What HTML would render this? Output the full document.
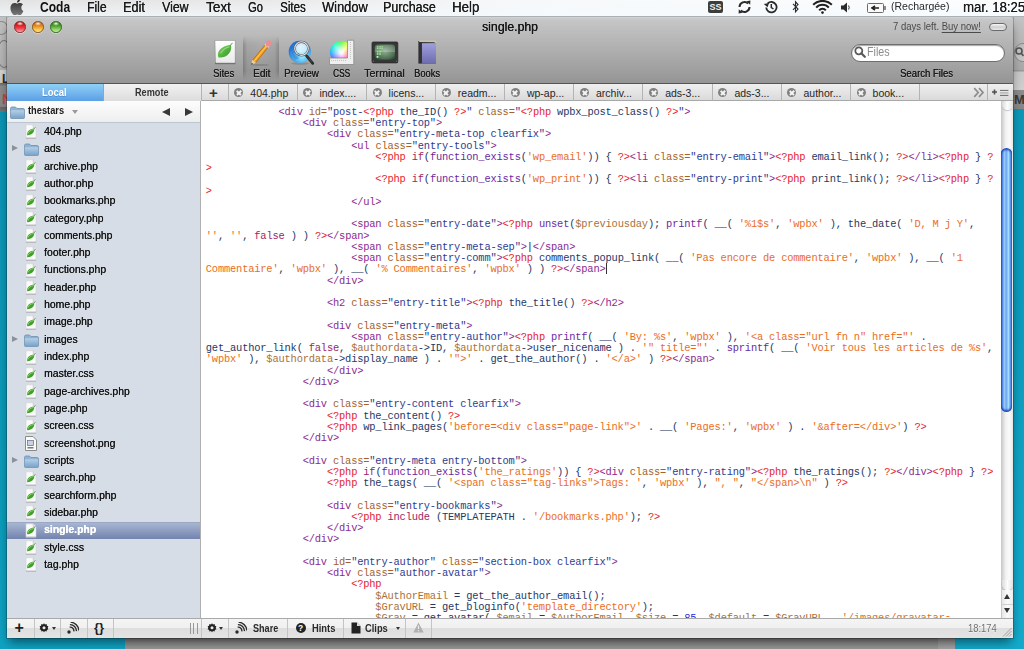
<!DOCTYPE html>
<html><head><meta charset="utf-8"><style>
*{margin:0;padding:0;box-sizing:border-box}
html,body{width:1024px;height:649px;overflow:hidden}
body{position:relative;font-family:"Liberation Sans",sans-serif;background:linear-gradient(170deg,#0a92b2 0%,#0c9cbc 60%,#14aacc 100%)}
.a{position:absolute}
b{font-weight:normal}
/* desktop background windows */
#bgw{position:absolute;left:125px;top:638px;width:830px;height:11px;background:linear-gradient(#7a7a7a,#8e8e8e 40%,#9a9a9a)}
#bgl{position:absolute;left:0;top:17px;width:7px;height:95px;background:linear-gradient(#c2c2c2 0,#b2b2b2 53px,#d4d4d4 53px,#cacaca 66px,#6a6a6a 66px,#7a7a7a 68px,#8c8c8c 69px,#888 90px,#666 90px,#777 95px)}
#bgr{position:absolute;left:1013px;top:17px;width:11px;height:92px;background:linear-gradient(#c4c4c4,#a9a9a9 53px,#9a9a9a 53px,#9a9a9a 54px,#c8c8c8 55px,#d0d0d0 73px,#8c8c8c 73px,#888 92px)}
/* menubar */
#menubar{position:absolute;z-index:5;left:0;top:0;width:1024px;height:17px;background:linear-gradient(rgba(255,255,255,0),rgba(245,250,253,.7)),linear-gradient(90deg,#e2e2e2,#e8e8e8 25%,#f6f8fa 50%,#fcfdfe 100%);border-bottom:1px solid #aab2b6}
.mi{z-index:6;position:absolute;top:-1px;font-size:13.5px;line-height:16px;color:#1c1c1c}
.mb{font-weight:bold}
/* window */
#win{position:absolute;left:7px;top:17px;width:1006px;height:621px;background:#bdbdbd;box-shadow:0 0 0 1px rgba(0,0,0,.2),0 6px 10px -2px rgba(0,0,0,.5)}
#tb{position:absolute;left:0;top:0;width:1006px;height:67px;background:linear-gradient(#d2d2d2,#c6c6c6 4%,#afafaf 50%,#959595);border-bottom:1px solid #555;border-radius:4px 4px 0 0}
.title{position:absolute;left:475px;top:19px;font-size:12.5px;color:#1a1a1a}
.lbl{position:absolute;top:66px;font-size:10.5px;color:#262626;text-shadow:0 1px 0 rgba(255,255,255,.35)}
/* tab bar */
#tabbar{position:absolute;left:201px;top:84px;width:812px;height:17px;background:linear-gradient(#efefef,#dadada);border-bottom:1px solid #a8a8a8}
.tdiv{position:absolute;top:84px;width:1px;height:17px;background:#b3b3b3}
.tx{position:absolute;top:88.4px;width:9px;height:9px;border-radius:50%;background:#808080}
.tx::before,.tx::after{content:'';position:absolute;left:1.6px;top:3.7px;width:5.8px;height:1.7px;background:#f4f4f4;transform:rotate(45deg)}
.tx::after{transform:rotate(-45deg)}
.tt{position:absolute;top:85.5px;font-size:10.5px;line-height:15px;color:#262626}
#local{position:absolute;left:7px;top:84px;width:96px;height:17px;background:linear-gradient(#8fd0f6,#5b9fe6)}
#remote{position:absolute;left:103px;top:84px;width:98px;height:17px;background:linear-gradient(#f2f2f2,#dcdcdc);border-left:1px solid #a0a0a0}
/* sidebar */
#side{position:absolute;left:7px;top:101px;width:193px;height:517px;background:#d6dde6}
#sidehdr{position:absolute;left:7px;top:101px;width:193px;height:22px;background:linear-gradient(#fdfdfd,#eeeeee);border-bottom:1px solid #bcc6d0}
.fn{position:absolute;left:43.5px;font-size:10.8px;line-height:13px;color:#151515;transform:scaleX(.965);transform-origin:0 0;text-shadow:0.2px 0 0 currentColor}
.selt{color:#fff;font-weight:bold}
.sel{position:absolute;left:7px;width:193px;height:17px;background:linear-gradient(#a8b6d2,#7283ad);border-top:1px solid #9aa8c6}
.tri{position:absolute;left:12px;width:0;height:0;border-left:6px solid #8c9099;border-top:3.5px solid transparent;border-bottom:3.5px solid transparent}
#divv{position:absolute;left:200px;top:101px;width:1px;height:517px;background:#b0b0b0}
/* editor */
#ed{position:absolute;left:201px;top:101px;width:800px;height:517px;background:#fff;overflow:hidden}
.cl{position:absolute;left:4.8px;white-space:pre;font-family:"Liberation Mono",monospace;font-size:10.4px;letter-spacing:-0.18px;line-height:11.245px;color:#222}

/* scrollbar */
#sb{position:absolute;left:1001px;top:101px;width:12px;height:517px;background:linear-gradient(90deg,#c6c6c6,#f2f2f2 40%,#fafafa 70%,#e6e6e6)}
/* bottom bar */
#bb{position:absolute;left:7px;top:618px;width:1006px;height:20px;background:linear-gradient(#f4f4f4,#f0f0f0 45%,#dedede 50%,#e4e4e4);border-top:1px solid #a9a9a9}
.bdiv{position:absolute;top:619px;width:1px;height:19px;background:#c4c4c4}
.bt{position:absolute;top:622px;font-size:11px;font-weight:bold;color:#333}
.tl{position:absolute;top:21px;width:11.6px;height:11.6px;border-radius:50%;border:0.6px solid #555;box-shadow:0 1px 0 rgba(255,255,255,.35)}

.fit{position:absolute;white-space:nowrap;transform-origin:0 0}

</style></head><body>
<div id="bgw"></div><div class="a" style="left:938px;top:638px;width:17px;height:11px;background:rgba(255,255,255,.12)"></div>
<div id="bgl"></div>
<div class="a" style="left:-5px;top:21px;width:13px;height:14px;border-radius:50%;border:1px solid #8a8a8a"></div>
<div class="a" style="left:-3px;top:40px;width:14px;height:28px;border-radius:50%;border:1.5px solid #7a7a7a"></div>
<div class="a" style="left:2px;top:72px;font-size:12px;font-weight:bold;color:#2a2a2a">L</div>
<div class="a" style="left:2px;top:91px;font-size:14px;color:#c04a4a;font-weight:bold">N</div>
<div id="bgr"></div>
<div class="a" style="left:1013.5px;top:43px;width:20px;height:18.5px;border-radius:9px 0 0 9px;background:linear-gradient(#bcbcbc,#c8c8c8);border:1px solid #8a8a8a"></div>
<svg class="a" style="left:1015px;top:47px" width="9" height="10"><circle cx="4" cy="4" r="3" fill="none" stroke="#555" stroke-width="1.6"/><path d="M6 6L8.5 9" stroke="#555" stroke-width="1.8"/></svg>
<div class="a" style="left:1014px;top:92px;font-size:13px;font-weight:bold;color:#3a3a3a">Me</div>

<div id="menubar"></div>
<svg class="a" style="z-index:6;left:10px;top:-1px" width="14" height="16" viewBox="0 0 14 16"><defs><linearGradient id="ap" x1="0" y1="0" x2="0" y2="1"><stop offset="0" stop-color="#2a2a2a"/><stop offset="1" stop-color="#7a7a7a"/></linearGradient></defs><path d="M11.3 8.6c0-2 1.6-2.9 1.7-3-0.9-1.4-2.4-1.5-2.9-1.5-1.2-0.1-2.4 0.7-3 0.7-0.6 0-1.6-0.7-2.6-0.7C3.100 4.100 1.800 4.900 1.100 6.200-0.300 8.700 0.700 12.300 2.100 14.300c0.700 1 1.500 2 2.500 2 1-0 1.400-0.700 2.600-0.700 1.200 0 1.500 0.700 2.600 0.600 1.100 0 1.700-1 2.400-2 0.800-1.100 1.100-2.200 1.100-2.200S11.300 11.300 11.300 8.600zM9.300 2.600C9.800 2 10.200 1.100 10.100 0.200 9.300 0.200 8.300 0.700 7.800 1.300 7.300 1.900 6.900 2.800 7 3.700 7.900 3.700 8.800 3.200 9.300 2.600z" fill="url(#ap)"/></svg>
<div class="a" style="z-index:6;left:708px;top:1px;width:15px;height:12px;border-radius:2px;background:#3d3d3d;color:#eee;font-size:9px;font-weight:bold;line-height:12px;text-align:center">SS</div>
<svg class="a" style="z-index:6;left:737px;top:0px" width="15" height="14" viewBox="0 0 15 14"><path d="M2.5 7a5 5 0 0 1 8.6-3.4" fill="none" stroke="#2a2a2a" stroke-width="2"/><path d="M12.5 7a5 5 0 0 1-8.6 3.4" fill="none" stroke="#2a2a2a" stroke-width="2"/><path d="M9.5 1.2L13.2 4.8 13.4 0.6Z" fill="#2a2a2a"/><path d="M5.5 12.8L1.8 9.2 1.6 13.4Z" fill="#2a2a2a"/></svg>
<svg class="a" style="z-index:6;left:763px;top:0px" width="15" height="14" viewBox="0 0 15 14"><path d="M3.2 7.5a5.2 5.2 0 1 0 1.5-4" fill="none" stroke="#2a2a2a" stroke-width="1.8"/><path d="M0.8 4L4.6 7.2 6 3Z" fill="#2a2a2a"/><path d="M8.3 4V7.5L10.5 9" fill="none" stroke="#2a2a2a" stroke-width="1.5"/></svg>
<svg class="a" style="z-index:6;left:792px;top:0px" width="8" height="14" viewBox="0 0 8 14"><path d="M1 3.8L6 9 3.5 11.8V1.8L6 4.6 1 9.8" fill="none" stroke="#2a2a2a" stroke-width="1.1"/></svg>
<svg class="a" style="z-index:6;left:812px;top:0px" width="21" height="14" viewBox="0 0 21 14"><path d="M1.2 4.8a13 13 0 0 1 18.6 0" fill="none" stroke="#1f1f1f" stroke-width="2"/><path d="M4.2 7.6a8.5 8.5 0 0 1 12.6 0" fill="none" stroke="#1f1f1f" stroke-width="2"/><path d="M7.2 10.4a4.2 4.2 0 0 1 6.6 0" fill="none" stroke="#1f1f1f" stroke-width="2"/><circle cx="10.5" cy="12.6" r="1.3" fill="#1f1f1f"/></svg>
<svg class="a" style="z-index:6;left:840px;top:1px" width="11" height="13" viewBox="0 0 11 13"><path d="M1 4.5H3.5L7 1.5V11.5L3.5 8.5H1Z" fill="#2a2a2a"/><path d="M8.6 4.5Q9.8 6.5 8.6 8.5" fill="none" stroke="#2a2a2a" stroke-width="1"/></svg>
<svg class="a" style="z-index:6;left:867px;top:3px" width="20" height="10" viewBox="0 0 20 10"><rect x="0.5" y="0.5" width="16" height="9" rx="1" fill="#fafafa" stroke="#6a6a6a"/><rect x="17" y="3" width="2" height="4" fill="#8a8a8a"/><path d="M4 5H12M8 2.8L5 5 8 7.2" fill="none" stroke="#222" stroke-width="1.6"/></svg>

<div id="win">
 <div id="tb"></div>
</div>
<div class="tl" style="left:14px;background:radial-gradient(ellipse 35% 22% at 50% 16%,rgba(255,255,255,.95),rgba(255,255,255,0)),linear-gradient(#9c0c12,#e3232b 40%,#f0505a 70%,#ffb0b4);border-color:#8a2424"></div>
<div class="tl" style="left:32.2px;background:radial-gradient(ellipse 35% 22% at 50% 16%,rgba(255,255,255,.95),rgba(255,255,255,0)),linear-gradient(#b0500c,#e88a22 40%,#f6c040 70%,#ffe88a);border-color:#8a5418"></div>
<div class="tl" style="left:50.3px;background:radial-gradient(ellipse 35% 22% at 50% 16%,rgba(255,255,255,.95),rgba(255,255,255,0)),linear-gradient(#2a7010,#4ea42a 40%,#8ad060 70%,#c8f0a0);border-color:#2f6a1c"></div>
<!-- toolbar icons -->
<div class="a" style="left:243px;top:36px;width:36px;height:44px;background:linear-gradient(90deg,rgba(0,0,0,.22),rgba(0,0,0,.07) 12%,rgba(0,0,0,.04) 50%,rgba(0,0,0,.07) 88%,rgba(0,0,0,.22));-webkit-mask-image:linear-gradient(transparent,#000 20%,#000 80%,transparent)"></div>
<svg class="a" style="left:213px;top:39px" width="24" height="27" viewBox="0 0 24 27">
 <defs><linearGradient id="pg" x1="0" y1="0" x2="0" y2="1"><stop offset="0" stop-color="#fff"/><stop offset="1" stop-color="#e9e9e9"/></linearGradient>
 <linearGradient id="lf" x1="0" y1="0" x2="1" y2="1"><stop offset="0" stop-color="#7fd05a"/><stop offset="1" stop-color="#2f9a22"/></linearGradient>
 <linearGradient id="fg" x1="0" y1="0" x2="0" y2="1"><stop offset="0" stop-color="#b4d0e8"/><stop offset="1" stop-color="#7aa2c8"/></linearGradient></defs>
 <path d="M2 1.5H22.2V24.3H2.5Z" fill="url(#pg)" stroke="rgba(0,0,0,.18)" stroke-width="1"/>
 <path d="M2 24.5H22.5" stroke="rgba(0,0,0,.25)" stroke-width="1.5"/>
 <path d="M5.5 18.5C3.2 13.5 7.5 6.8 18 5.8 19.5 12.8 14 19.5 5.5 18.5Z" fill="url(#lf)"/>
 <path d="M7.5 14.5C9.5 11 12.5 8.6 16.5 7.6" stroke="rgba(255,255,255,.35)" stroke-width="1.4" fill="none"/>
 <path d="M17.5 6.2L19.5 3.8" stroke="#4aa832" stroke-width="1"/>
</svg>
<svg class="a" style="left:249px;top:39px" width="24" height="28" viewBox="0 0 24 28">
 <ellipse cx="11.5" cy="26" rx="8.5" ry="1" fill="rgba(0,0,0,.13)"/>
 <path d="M5.03 22.5L17.3 7.35" stroke="#c86a08" stroke-width="4.6"/>
 <path d="M5.03 22.5L17.3 7.35" stroke="#f5a623" stroke-width="3"/>
 <path d="M5.6 21.6L17.6 6.8" stroke="#ffd070" stroke-width="0.9"/>
 <path d="M17.3 7.35L18.87 5.4" stroke="#e8e8e8" stroke-width="4.6"/>
 <path d="M18.87 5.4L20.2 3.8" stroke="#f28a8e" stroke-width="4.6" stroke-linecap="round"/>
 <path d="M2.2 26L3.3 20.8 6.9 23.8Z" fill="#f0cf98"/>
 <path d="M2.2 26L2.7 23.7 4.3 25Z" fill="#3a3a3a"/>
</svg>
<svg class="a" style="left:287px;top:39px" width="28" height="27" viewBox="0 0 28 27">
 <defs><radialGradient id="gl" cx=".6" cy=".68" r=".7"><stop offset="0" stop-color="#a8f4ff"/><stop offset=".45" stop-color="#52b8f2"/><stop offset="1" stop-color="#1c66d4"/></radialGradient>
 <radialGradient id="ln" cx=".45" cy=".35" r=".7"><stop offset="0" stop-color="#ffffff"/><stop offset=".6" stop-color="#d8f6ff"/><stop offset="1" stop-color="#8ad4f4"/></radialGradient></defs>
 <ellipse cx="13" cy="24.6" rx="9" ry="1.4" fill="rgba(0,0,0,.13)"/>
 <circle cx="12.8" cy="12.8" r="11.1" fill="url(#gl)"/>
 <path d="M3.5 8.5Q6 5.5 9 7.5T8.5 12 10 17 8 20.5Q5 17 4.5 13 3 11 3.5 8.5Z" fill="rgba(30,100,200,.35)"/>
 <path d="M19 4Q22 6 22.5 9L20 10Z" fill="rgba(30,100,200,.3)"/>
 <path d="M19.6 16.9L25.7 24.3" stroke="#2a2a2a" stroke-width="2.8" stroke-linecap="round"/>
 <path d="M20.2 17.6L25.2 23.6" stroke="#777" stroke-width="0.8" stroke-dasharray="0.8 0.8"/>
 <circle cx="14.5" cy="9.6" r="6.8" fill="url(#ln)" fill-opacity=".85" stroke="#5a5a5a" stroke-width="2.2"/>
 <circle cx="14.5" cy="9.6" r="6.8" fill="none" stroke="#e4e4e4" stroke-width="1.1"/>
 <path d="M10 15Q12 13 13 15T11.5 17Z" fill="rgba(30,100,200,.35)"/>
</svg>
<div class="a" style="left:329px;top:39px;width:19px;height:19px;overflow:hidden"><div class="a" style="left:0.5px;top:1.5px;width:23px;height:23px;border-radius:50%;background:radial-gradient(circle at 50% 50%,#fff 0,rgba(255,255,255,.9) 12%,rgba(255,255,255,0) 70%),conic-gradient(from 0deg,#50ff40,#ffff30 12%,#ff6020 25%,#ff2080 38%,#e020f0 50%,#7040ff 62%,#20b0ff 75%,#20ffd0 88%,#50ff40)"></div></div>
<svg class="a" style="left:329px;top:39px" width="26" height="27" viewBox="0 0 26 27">
 <path d="M0.5 19H18.5V1.2H24.8V25.5H0.5Z" fill="#efefef" stroke="#8a8a8a" stroke-width="0.8"/>
 <path d="M2 21.5H18M21.5 3V20" stroke="#a0a0a0" stroke-width="0.7" stroke-dasharray="0.8 1.2"/>
</svg>
<svg class="a" style="left:371px;top:41px" width="28" height="23" viewBox="0 0 28 23">
 <defs><radialGradient id="sc" cx=".5" cy=".45" r=".7"><stop offset="0" stop-color="#8fae94"/><stop offset=".7" stop-color="#4d6c52"/><stop offset="1" stop-color="#243a28"/></radialGradient>
 <linearGradient id="rf" x1="0" y1="0" x2="0" y2="1"><stop offset="0" stop-color="#fff" stop-opacity=".12"/><stop offset=".5" stop-color="#fff" stop-opacity=".22"/><stop offset=".52" stop-color="#fff" stop-opacity="0"/></linearGradient></defs>
 <rect x="1" y="1" width="25.8" height="20.9" rx="1.2" fill="#363636" stroke="#2a2a2a" stroke-width="0.8"/>
 <rect x="3.8" y="3.4" width="20.2" height="15.4" rx="2.5" fill="url(#sc)"/>
 <rect x="3.8" y="3.4" width="20.2" height="15.4" rx="2.5" fill="url(#rf)"/>
 <path d="M5.8 5.8H11.8M5.8 7.3H11.8M5.8 10.2H10.5M5.8 12H10M5.8 13.2H10" stroke="#a8f0a0" stroke-width="1.1" stroke-dasharray="1.2 0.5"/>
 <rect x="5.6" y="15" width="1.8" height="1.8" fill="#b0ffa8"/>
 <circle cx="2.3" cy="20.2" r="0.7" fill="#666"/><circle cx="25.5" cy="20.2" r="0.7" fill="#666"/>
</svg>
<svg class="a" style="left:417px;top:40px" width="20" height="25" viewBox="0 0 20 25">
 <defs><linearGradient id="bk" x1="0" y1="0" x2="0" y2="1"><stop offset="0" stop-color="#a0a0dc"/><stop offset="1" stop-color="#6c6cae"/></linearGradient>
 <linearGradient id="sp" x1="0" y1="0" x2="1" y2="0"><stop offset="0" stop-color="#2e2e2e"/><stop offset="1" stop-color="#5a5a5a"/></linearGradient></defs>
 <rect x="1.4" y="1" width="17.6" height="22.6" fill="url(#sp)"/>
 <path d="M2.2 1.2H18.4V3" stroke="#c9c6a6" stroke-width="1.4" fill="none"/>
 <rect x="5" y="3.2" width="14" height="20.4" fill="url(#bk)"/>
</svg>

<div class="a" style="left:989px;top:22.5px;width:18px;height:8.5px;border-radius:5px;border:1px solid #6a6a6a;background:linear-gradient(#f8f8f8,#cfcfcf 50%,#e8e8e8)"></div>
<div class="a" style="left:851px;top:43.5px;width:154px;height:18.5px;border-radius:9.5px;background:#fff;border:1px solid #6f6f6f;box-shadow:inset 0 1px 1px rgba(0,0,0,.35)"></div>
<svg class="a" style="left:854px;top:46px" width="12" height="12" viewBox="0 0 12 12"><circle cx="4.8" cy="4.8" r="3.5" fill="none" stroke="#5a5a5a" stroke-width="1.8"/><path d="M7.3 7.3L10.8 10.8" stroke="#5a5a5a" stroke-width="2.2" stroke-linecap="round"/></svg>

<!-- tab bar -->
<div id="local"></div>
<div id="remote"></div>
<div id="tabbar"></div>
<div class="tdiv" style="left:227.5px"></div>
<div class="tx" style="left:234.2px"></div>
<div class="tt" style="left:250.3px">404.php</div>
<div class="tdiv" style="left:296.6px"></div>
<div class="tx" style="left:303.3px"></div>
<div class="tt" style="left:319.4px">index....</div>
<div class="tdiv" style="left:365.8px"></div>
<div class="tx" style="left:372.5px"></div>
<div class="tt" style="left:388.6px">licens...</div>
<div class="tdiv" style="left:435.0px"></div>
<div class="tx" style="left:441.7px"></div>
<div class="tt" style="left:457.8px">readm...</div>
<div class="tdiv" style="left:504.1px"></div>
<div class="tx" style="left:510.8px"></div>
<div class="tt" style="left:526.9px">wp-ap...</div>
<div class="tdiv" style="left:573.2px"></div>
<div class="tx" style="left:580.0px"></div>
<div class="tt" style="left:596.0px">archiv...</div>
<div class="tdiv" style="left:642.4px"></div>
<div class="tx" style="left:649.1px"></div>
<div class="tt" style="left:665.2px">ads-3...</div>
<div class="tdiv" style="left:711.6px"></div>
<div class="tx" style="left:718.3px"></div>
<div class="tt" style="left:734.4px">ads-3...</div>
<div class="tdiv" style="left:780.7px"></div>
<div class="tx" style="left:787.4px"></div>
<div class="tt" style="left:803.5px">author...</div>
<div class="tdiv" style="left:849.9px"></div>
<div class="tx" style="left:856.6px"></div>
<div class="tt" style="left:872.6px">book...</div>
<div class="tdiv" style="left:918.5px"></div>
<div class="tdiv" style="left:987.3px"></div>
<div class="tdiv" style="left:201px"></div>
<div class="a" style="left:209px;top:84px;font-size:15px;line-height:17px;font-weight:bold;color:#333">+</div>
<svg class="a" style="left:973px;top:87px" width="12" height="11" viewBox="0 0 12 11"><path d="M1.2 1.2L5.2 5.5 1.2 9.8M6 1.2L10 5.5 6 9.8" fill="none" stroke="#8c8c8c" stroke-width="1.7"/></svg>
<svg class="a" style="left:990px;top:86px" width="20" height="12" viewBox="0 0 20 12"><path d="M4.5 3.5V8.5M2 6H7" stroke="#505050" stroke-width="1.6"/><path d="M10 4.4H18.4M10 9.4H18.4" stroke="#6a6a6a" stroke-width="1"/><path d="M10 6.9H18.4" stroke="#a8a8a8" stroke-width="1.1"/></svg>

<div id="side"></div>
<div id="sidehdr"></div>
<div class="a" style="left:10px;top:104.5px"><svg width="15" height="13" viewBox="0 0 15 13"><path d="M0.5 2.5Q0.5 1 2 1H5.5L7 2.5H13Q14.5 2.5 14.5 4V11.5Q14.5 12.5 13.5 12.5H1.5Q0.5 12.5 0.5 11.5Z" fill="#8fb3d2" stroke="#6d8fae" stroke-width="0.8"/><path d="M0.8 4.2H14.2V11.5Q14.2 12.2 13.5 12.2H1.5Q0.8 12.2 0.8 11.5Z" fill="url(#fg)"/></svg></div>
<div class="a" style="left:72px;top:110px;width:0;height:0;border-top:4px solid #9a9a9a;border-left:3px solid transparent;border-right:3px solid transparent"></div>
<div class="a" style="left:162px;top:107.5px;width:0;height:0;border-right:8px solid #383838;border-top:4.5px solid transparent;border-bottom:4.5px solid transparent"></div>
<div class="a" style="left:185px;top:107.5px;width:0;height:0;border-left:8px solid #383838;border-top:4.5px solid transparent;border-bottom:4.5px solid transparent"></div>
<div class="a" style="left:25px;top:124.40px"><svg class="ic" width="12" height="15" viewBox="0 0 12 15"><path d="M1 0.8H8.2L11 3.6V14.2H1Z" fill="#fafafa" stroke="#d0d0d0" stroke-width="0.6"/><path d="M1 14.2H11" stroke="#a8a8a8" stroke-width="0.9"/><path d="M8.2 0.8V3.6H11" fill="#dedede" stroke="#bdbdbd" stroke-width="0.6"/><path d="M2.2 11.2C1.6 8 4 5 9.3 4.6 9.6 8.6 6.6 11.4 2.2 11.2Z" fill="#3fa02e"/><path d="M3 9.6C3.6 7.4 5.6 6 8.6 5.5" stroke="#8fdc6a" stroke-width="0.9" fill="none"/><path d="M9 5L10.3 3.4" stroke="#555" stroke-width="0.6"/></svg></div>
<div class="fn" style="top:124.90px">404.php</div>
<div class="tri" style="top:145.22px"></div>
<div class="a" style="left:24px;top:142.22px"><svg class="ic" width="15" height="13" viewBox="0 0 15 13"><path d="M0.5 2.5Q0.5 1 2 1H5.5L7 2.5H13Q14.5 2.5 14.5 4V11.5Q14.5 12.5 13.5 12.5H1.5Q0.5 12.5 0.5 11.5Z" fill="#8fb3d2" stroke="#6d8fae" stroke-width="0.8"/><path d="M0.8 4.2H14.2V11.5Q14.2 12.2 13.5 12.2H1.5Q0.8 12.2 0.8 11.5Z" fill="url(#fg)"/></svg></div>
<div class="fn" style="top:142.22px">ads</div>
<div class="a" style="left:25px;top:159.04px"><svg class="ic" width="12" height="15" viewBox="0 0 12 15"><path d="M1 0.8H8.2L11 3.6V14.2H1Z" fill="#fafafa" stroke="#d0d0d0" stroke-width="0.6"/><path d="M1 14.2H11" stroke="#a8a8a8" stroke-width="0.9"/><path d="M8.2 0.8V3.6H11" fill="#dedede" stroke="#bdbdbd" stroke-width="0.6"/><path d="M2.2 11.2C1.6 8 4 5 9.3 4.6 9.6 8.6 6.6 11.4 2.2 11.2Z" fill="#3fa02e"/><path d="M3 9.6C3.6 7.4 5.6 6 8.6 5.5" stroke="#8fdc6a" stroke-width="0.9" fill="none"/><path d="M9 5L10.3 3.4" stroke="#555" stroke-width="0.6"/></svg></div>
<div class="fn" style="top:159.54px">archive.php</div>
<div class="a" style="left:25px;top:176.36px"><svg class="ic" width="12" height="15" viewBox="0 0 12 15"><path d="M1 0.8H8.2L11 3.6V14.2H1Z" fill="#fafafa" stroke="#d0d0d0" stroke-width="0.6"/><path d="M1 14.2H11" stroke="#a8a8a8" stroke-width="0.9"/><path d="M8.2 0.8V3.6H11" fill="#dedede" stroke="#bdbdbd" stroke-width="0.6"/><path d="M2.2 11.2C1.6 8 4 5 9.3 4.6 9.6 8.6 6.6 11.4 2.2 11.2Z" fill="#3fa02e"/><path d="M3 9.6C3.6 7.4 5.6 6 8.6 5.5" stroke="#8fdc6a" stroke-width="0.9" fill="none"/><path d="M9 5L10.3 3.4" stroke="#555" stroke-width="0.6"/></svg></div>
<div class="fn" style="top:176.86px">author.php</div>
<div class="a" style="left:25px;top:193.68px"><svg class="ic" width="12" height="15" viewBox="0 0 12 15"><path d="M1 0.8H8.2L11 3.6V14.2H1Z" fill="#fafafa" stroke="#d0d0d0" stroke-width="0.6"/><path d="M1 14.2H11" stroke="#a8a8a8" stroke-width="0.9"/><path d="M8.2 0.8V3.6H11" fill="#dedede" stroke="#bdbdbd" stroke-width="0.6"/><path d="M2.2 11.2C1.6 8 4 5 9.3 4.6 9.6 8.6 6.6 11.4 2.2 11.2Z" fill="#3fa02e"/><path d="M3 9.6C3.6 7.4 5.6 6 8.6 5.5" stroke="#8fdc6a" stroke-width="0.9" fill="none"/><path d="M9 5L10.3 3.4" stroke="#555" stroke-width="0.6"/></svg></div>
<div class="fn" style="top:194.18px">bookmarks.php</div>
<div class="a" style="left:25px;top:211.00px"><svg class="ic" width="12" height="15" viewBox="0 0 12 15"><path d="M1 0.8H8.2L11 3.6V14.2H1Z" fill="#fafafa" stroke="#d0d0d0" stroke-width="0.6"/><path d="M1 14.2H11" stroke="#a8a8a8" stroke-width="0.9"/><path d="M8.2 0.8V3.6H11" fill="#dedede" stroke="#bdbdbd" stroke-width="0.6"/><path d="M2.2 11.2C1.6 8 4 5 9.3 4.6 9.6 8.6 6.6 11.4 2.2 11.2Z" fill="#3fa02e"/><path d="M3 9.6C3.6 7.4 5.6 6 8.6 5.5" stroke="#8fdc6a" stroke-width="0.9" fill="none"/><path d="M9 5L10.3 3.4" stroke="#555" stroke-width="0.6"/></svg></div>
<div class="fn" style="top:211.50px">category.php</div>
<div class="a" style="left:25px;top:228.32px"><svg class="ic" width="12" height="15" viewBox="0 0 12 15"><path d="M1 0.8H8.2L11 3.6V14.2H1Z" fill="#fafafa" stroke="#d0d0d0" stroke-width="0.6"/><path d="M1 14.2H11" stroke="#a8a8a8" stroke-width="0.9"/><path d="M8.2 0.8V3.6H11" fill="#dedede" stroke="#bdbdbd" stroke-width="0.6"/><path d="M2.2 11.2C1.6 8 4 5 9.3 4.6 9.6 8.6 6.6 11.4 2.2 11.2Z" fill="#3fa02e"/><path d="M3 9.6C3.6 7.4 5.6 6 8.6 5.5" stroke="#8fdc6a" stroke-width="0.9" fill="none"/><path d="M9 5L10.3 3.4" stroke="#555" stroke-width="0.6"/></svg></div>
<div class="fn" style="top:228.82px">comments.php</div>
<div class="a" style="left:25px;top:245.64px"><svg class="ic" width="12" height="15" viewBox="0 0 12 15"><path d="M1 0.8H8.2L11 3.6V14.2H1Z" fill="#fafafa" stroke="#d0d0d0" stroke-width="0.6"/><path d="M1 14.2H11" stroke="#a8a8a8" stroke-width="0.9"/><path d="M8.2 0.8V3.6H11" fill="#dedede" stroke="#bdbdbd" stroke-width="0.6"/><path d="M2.2 11.2C1.6 8 4 5 9.3 4.6 9.6 8.6 6.6 11.4 2.2 11.2Z" fill="#3fa02e"/><path d="M3 9.6C3.6 7.4 5.6 6 8.6 5.5" stroke="#8fdc6a" stroke-width="0.9" fill="none"/><path d="M9 5L10.3 3.4" stroke="#555" stroke-width="0.6"/></svg></div>
<div class="fn" style="top:246.14px">footer.php</div>
<div class="a" style="left:25px;top:262.96px"><svg class="ic" width="12" height="15" viewBox="0 0 12 15"><path d="M1 0.8H8.2L11 3.6V14.2H1Z" fill="#fafafa" stroke="#d0d0d0" stroke-width="0.6"/><path d="M1 14.2H11" stroke="#a8a8a8" stroke-width="0.9"/><path d="M8.2 0.8V3.6H11" fill="#dedede" stroke="#bdbdbd" stroke-width="0.6"/><path d="M2.2 11.2C1.6 8 4 5 9.3 4.6 9.6 8.6 6.6 11.4 2.2 11.2Z" fill="#3fa02e"/><path d="M3 9.6C3.6 7.4 5.6 6 8.6 5.5" stroke="#8fdc6a" stroke-width="0.9" fill="none"/><path d="M9 5L10.3 3.4" stroke="#555" stroke-width="0.6"/></svg></div>
<div class="fn" style="top:263.46px">functions.php</div>
<div class="a" style="left:25px;top:280.28px"><svg class="ic" width="12" height="15" viewBox="0 0 12 15"><path d="M1 0.8H8.2L11 3.6V14.2H1Z" fill="#fafafa" stroke="#d0d0d0" stroke-width="0.6"/><path d="M1 14.2H11" stroke="#a8a8a8" stroke-width="0.9"/><path d="M8.2 0.8V3.6H11" fill="#dedede" stroke="#bdbdbd" stroke-width="0.6"/><path d="M2.2 11.2C1.6 8 4 5 9.3 4.6 9.6 8.6 6.6 11.4 2.2 11.2Z" fill="#3fa02e"/><path d="M3 9.6C3.6 7.4 5.6 6 8.6 5.5" stroke="#8fdc6a" stroke-width="0.9" fill="none"/><path d="M9 5L10.3 3.4" stroke="#555" stroke-width="0.6"/></svg></div>
<div class="fn" style="top:280.78px">header.php</div>
<div class="a" style="left:25px;top:297.60px"><svg class="ic" width="12" height="15" viewBox="0 0 12 15"><path d="M1 0.8H8.2L11 3.6V14.2H1Z" fill="#fafafa" stroke="#d0d0d0" stroke-width="0.6"/><path d="M1 14.2H11" stroke="#a8a8a8" stroke-width="0.9"/><path d="M8.2 0.8V3.6H11" fill="#dedede" stroke="#bdbdbd" stroke-width="0.6"/><path d="M2.2 11.2C1.6 8 4 5 9.3 4.6 9.6 8.6 6.6 11.4 2.2 11.2Z" fill="#3fa02e"/><path d="M3 9.6C3.6 7.4 5.6 6 8.6 5.5" stroke="#8fdc6a" stroke-width="0.9" fill="none"/><path d="M9 5L10.3 3.4" stroke="#555" stroke-width="0.6"/></svg></div>
<div class="fn" style="top:298.10px">home.php</div>
<div class="a" style="left:25px;top:314.92px"><svg class="ic" width="12" height="15" viewBox="0 0 12 15"><path d="M1 0.8H8.2L11 3.6V14.2H1Z" fill="#fafafa" stroke="#d0d0d0" stroke-width="0.6"/><path d="M1 14.2H11" stroke="#a8a8a8" stroke-width="0.9"/><path d="M8.2 0.8V3.6H11" fill="#dedede" stroke="#bdbdbd" stroke-width="0.6"/><path d="M2.2 11.2C1.6 8 4 5 9.3 4.6 9.6 8.6 6.6 11.4 2.2 11.2Z" fill="#3fa02e"/><path d="M3 9.6C3.6 7.4 5.6 6 8.6 5.5" stroke="#8fdc6a" stroke-width="0.9" fill="none"/><path d="M9 5L10.3 3.4" stroke="#555" stroke-width="0.6"/></svg></div>
<div class="fn" style="top:315.42px">image.php</div>
<div class="tri" style="top:335.74px"></div>
<div class="a" style="left:24px;top:332.74px"><svg class="ic" width="15" height="13" viewBox="0 0 15 13"><path d="M0.5 2.5Q0.5 1 2 1H5.5L7 2.5H13Q14.5 2.5 14.5 4V11.5Q14.5 12.5 13.5 12.5H1.5Q0.5 12.5 0.5 11.5Z" fill="#8fb3d2" stroke="#6d8fae" stroke-width="0.8"/><path d="M0.8 4.2H14.2V11.5Q14.2 12.2 13.5 12.2H1.5Q0.8 12.2 0.8 11.5Z" fill="url(#fg)"/></svg></div>
<div class="fn" style="top:332.74px">images</div>
<div class="a" style="left:25px;top:349.56px"><svg class="ic" width="12" height="15" viewBox="0 0 12 15"><path d="M1 0.8H8.2L11 3.6V14.2H1Z" fill="#fafafa" stroke="#d0d0d0" stroke-width="0.6"/><path d="M1 14.2H11" stroke="#a8a8a8" stroke-width="0.9"/><path d="M8.2 0.8V3.6H11" fill="#dedede" stroke="#bdbdbd" stroke-width="0.6"/><path d="M2.2 11.2C1.6 8 4 5 9.3 4.6 9.6 8.6 6.6 11.4 2.2 11.2Z" fill="#3fa02e"/><path d="M3 9.6C3.6 7.4 5.6 6 8.6 5.5" stroke="#8fdc6a" stroke-width="0.9" fill="none"/><path d="M9 5L10.3 3.4" stroke="#555" stroke-width="0.6"/></svg></div>
<div class="fn" style="top:350.06px">index.php</div>
<div class="a" style="left:25px;top:366.88px"><svg class="ic" width="12" height="15" viewBox="0 0 12 15"><path d="M1 0.8H8.2L11 3.6V14.2H1Z" fill="#fafafa" stroke="#d0d0d0" stroke-width="0.6"/><path d="M1 14.2H11" stroke="#a8a8a8" stroke-width="0.9"/><path d="M8.2 0.8V3.6H11" fill="#dedede" stroke="#bdbdbd" stroke-width="0.6"/><path d="M2.2 11.2C1.6 8 4 5 9.3 4.6 9.6 8.6 6.6 11.4 2.2 11.2Z" fill="#3fa02e"/><path d="M3 9.6C3.6 7.4 5.6 6 8.6 5.5" stroke="#8fdc6a" stroke-width="0.9" fill="none"/><path d="M9 5L10.3 3.4" stroke="#555" stroke-width="0.6"/></svg></div>
<div class="fn" style="top:367.38px">master.css</div>
<div class="a" style="left:25px;top:384.20px"><svg class="ic" width="12" height="15" viewBox="0 0 12 15"><path d="M1 0.8H8.2L11 3.6V14.2H1Z" fill="#fafafa" stroke="#d0d0d0" stroke-width="0.6"/><path d="M1 14.2H11" stroke="#a8a8a8" stroke-width="0.9"/><path d="M8.2 0.8V3.6H11" fill="#dedede" stroke="#bdbdbd" stroke-width="0.6"/><path d="M2.2 11.2C1.6 8 4 5 9.3 4.6 9.6 8.6 6.6 11.4 2.2 11.2Z" fill="#3fa02e"/><path d="M3 9.6C3.6 7.4 5.6 6 8.6 5.5" stroke="#8fdc6a" stroke-width="0.9" fill="none"/><path d="M9 5L10.3 3.4" stroke="#555" stroke-width="0.6"/></svg></div>
<div class="fn" style="top:384.70px">page-archives.php</div>
<div class="a" style="left:25px;top:401.52px"><svg class="ic" width="12" height="15" viewBox="0 0 12 15"><path d="M1 0.8H8.2L11 3.6V14.2H1Z" fill="#fafafa" stroke="#d0d0d0" stroke-width="0.6"/><path d="M1 14.2H11" stroke="#a8a8a8" stroke-width="0.9"/><path d="M8.2 0.8V3.6H11" fill="#dedede" stroke="#bdbdbd" stroke-width="0.6"/><path d="M2.2 11.2C1.6 8 4 5 9.3 4.6 9.6 8.6 6.6 11.4 2.2 11.2Z" fill="#3fa02e"/><path d="M3 9.6C3.6 7.4 5.6 6 8.6 5.5" stroke="#8fdc6a" stroke-width="0.9" fill="none"/><path d="M9 5L10.3 3.4" stroke="#555" stroke-width="0.6"/></svg></div>
<div class="fn" style="top:402.02px">page.php</div>
<div class="a" style="left:25px;top:418.84px"><svg class="ic" width="12" height="15" viewBox="0 0 12 15"><path d="M1 0.8H8.2L11 3.6V14.2H1Z" fill="#fafafa" stroke="#d0d0d0" stroke-width="0.6"/><path d="M1 14.2H11" stroke="#a8a8a8" stroke-width="0.9"/><path d="M8.2 0.8V3.6H11" fill="#dedede" stroke="#bdbdbd" stroke-width="0.6"/><path d="M2.2 11.2C1.6 8 4 5 9.3 4.6 9.6 8.6 6.6 11.4 2.2 11.2Z" fill="#3fa02e"/><path d="M3 9.6C3.6 7.4 5.6 6 8.6 5.5" stroke="#8fdc6a" stroke-width="0.9" fill="none"/><path d="M9 5L10.3 3.4" stroke="#555" stroke-width="0.6"/></svg></div>
<div class="fn" style="top:419.34px">screen.css</div>
<div class="a" style="left:25px;top:436.16px"><svg class="ic" width="12" height="15" viewBox="0 0 12 15"><path d="M0.5 0.5H8L11.5 4V14.5H0.5Z" fill="#fbfbfb" stroke="#8a8a8a"/><rect x="2.5" y="4.5" width="6" height="5" fill="#c9d3e2" stroke="#5a6a8a" stroke-width="0.7"/><rect x="2.5" y="11" width="6" height="1.5" fill="#777"/></svg></div>
<div class="fn" style="top:436.66px">screenshot.png</div>
<div class="tri" style="top:456.98px"></div>
<div class="a" style="left:24px;top:453.98px"><svg class="ic" width="15" height="13" viewBox="0 0 15 13"><path d="M0.5 2.5Q0.5 1 2 1H5.5L7 2.5H13Q14.5 2.5 14.5 4V11.5Q14.5 12.5 13.5 12.5H1.5Q0.5 12.5 0.5 11.5Z" fill="#8fb3d2" stroke="#6d8fae" stroke-width="0.8"/><path d="M0.8 4.2H14.2V11.5Q14.2 12.2 13.5 12.2H1.5Q0.8 12.2 0.8 11.5Z" fill="url(#fg)"/></svg></div>
<div class="fn" style="top:453.98px">scripts</div>
<div class="a" style="left:25px;top:470.80px"><svg class="ic" width="12" height="15" viewBox="0 0 12 15"><path d="M1 0.8H8.2L11 3.6V14.2H1Z" fill="#fafafa" stroke="#d0d0d0" stroke-width="0.6"/><path d="M1 14.2H11" stroke="#a8a8a8" stroke-width="0.9"/><path d="M8.2 0.8V3.6H11" fill="#dedede" stroke="#bdbdbd" stroke-width="0.6"/><path d="M2.2 11.2C1.6 8 4 5 9.3 4.6 9.6 8.6 6.6 11.4 2.2 11.2Z" fill="#3fa02e"/><path d="M3 9.6C3.6 7.4 5.6 6 8.6 5.5" stroke="#8fdc6a" stroke-width="0.9" fill="none"/><path d="M9 5L10.3 3.4" stroke="#555" stroke-width="0.6"/></svg></div>
<div class="fn" style="top:471.30px">search.php</div>
<div class="a" style="left:25px;top:488.12px"><svg class="ic" width="12" height="15" viewBox="0 0 12 15"><path d="M1 0.8H8.2L11 3.6V14.2H1Z" fill="#fafafa" stroke="#d0d0d0" stroke-width="0.6"/><path d="M1 14.2H11" stroke="#a8a8a8" stroke-width="0.9"/><path d="M8.2 0.8V3.6H11" fill="#dedede" stroke="#bdbdbd" stroke-width="0.6"/><path d="M2.2 11.2C1.6 8 4 5 9.3 4.6 9.6 8.6 6.6 11.4 2.2 11.2Z" fill="#3fa02e"/><path d="M3 9.6C3.6 7.4 5.6 6 8.6 5.5" stroke="#8fdc6a" stroke-width="0.9" fill="none"/><path d="M9 5L10.3 3.4" stroke="#555" stroke-width="0.6"/></svg></div>
<div class="fn" style="top:488.62px">searchform.php</div>
<div class="a" style="left:25px;top:505.44px"><svg class="ic" width="12" height="15" viewBox="0 0 12 15"><path d="M1 0.8H8.2L11 3.6V14.2H1Z" fill="#fafafa" stroke="#d0d0d0" stroke-width="0.6"/><path d="M1 14.2H11" stroke="#a8a8a8" stroke-width="0.9"/><path d="M8.2 0.8V3.6H11" fill="#dedede" stroke="#bdbdbd" stroke-width="0.6"/><path d="M2.2 11.2C1.6 8 4 5 9.3 4.6 9.6 8.6 6.6 11.4 2.2 11.2Z" fill="#3fa02e"/><path d="M3 9.6C3.6 7.4 5.6 6 8.6 5.5" stroke="#8fdc6a" stroke-width="0.9" fill="none"/><path d="M9 5L10.3 3.4" stroke="#555" stroke-width="0.6"/></svg></div>
<div class="fn" style="top:505.94px">sidebar.php</div>
<div class="sel" style="top:521.70px"></div>
<div class="a" style="left:25px;top:522.76px"><svg class="ic" width="12" height="15" viewBox="0 0 12 15"><path d="M1 0.8H8.2L11 3.6V14.2H1Z" fill="#fafafa" stroke="#d0d0d0" stroke-width="0.6"/><path d="M1 14.2H11" stroke="#a8a8a8" stroke-width="0.9"/><path d="M8.2 0.8V3.6H11" fill="#dedede" stroke="#bdbdbd" stroke-width="0.6"/><path d="M2.2 11.2C1.6 8 4 5 9.3 4.6 9.6 8.6 6.6 11.4 2.2 11.2Z" fill="#3fa02e"/><path d="M3 9.6C3.6 7.4 5.6 6 8.6 5.5" stroke="#8fdc6a" stroke-width="0.9" fill="none"/><path d="M9 5L10.3 3.4" stroke="#555" stroke-width="0.6"/></svg></div>
<div class="fn selt" style="top:523.26px">single.php</div>
<div class="a" style="left:25px;top:540.08px"><svg class="ic" width="12" height="15" viewBox="0 0 12 15"><path d="M1 0.8H8.2L11 3.6V14.2H1Z" fill="#fafafa" stroke="#d0d0d0" stroke-width="0.6"/><path d="M1 14.2H11" stroke="#a8a8a8" stroke-width="0.9"/><path d="M8.2 0.8V3.6H11" fill="#dedede" stroke="#bdbdbd" stroke-width="0.6"/><path d="M2.2 11.2C1.6 8 4 5 9.3 4.6 9.6 8.6 6.6 11.4 2.2 11.2Z" fill="#3fa02e"/><path d="M3 9.6C3.6 7.4 5.6 6 8.6 5.5" stroke="#8fdc6a" stroke-width="0.9" fill="none"/><path d="M9 5L10.3 3.4" stroke="#555" stroke-width="0.6"/></svg></div>
<div class="fn" style="top:540.58px">style.css</div>
<div class="a" style="left:25px;top:557.40px"><svg class="ic" width="12" height="15" viewBox="0 0 12 15"><path d="M1 0.8H8.2L11 3.6V14.2H1Z" fill="#fafafa" stroke="#d0d0d0" stroke-width="0.6"/><path d="M1 14.2H11" stroke="#a8a8a8" stroke-width="0.9"/><path d="M8.2 0.8V3.6H11" fill="#dedede" stroke="#bdbdbd" stroke-width="0.6"/><path d="M2.2 11.2C1.6 8 4 5 9.3 4.6 9.6 8.6 6.6 11.4 2.2 11.2Z" fill="#3fa02e"/><path d="M3 9.6C3.6 7.4 5.6 6 8.6 5.5" stroke="#8fdc6a" stroke-width="0.9" fill="none"/><path d="M9 5L10.3 3.4" stroke="#555" stroke-width="0.6"/></svg></div>
<div class="fn" style="top:557.90px">tag.php</div>
<div id="divv"></div>
<div id="ed">
<div class="cl" style="top:6.00px">            <b style="color:#8b2a8f">&lt;div </b><b style="color:#a65f2b">id=</b><b style="color:#2f3c90">&quot;post-</b><b style="color:#e5242e">&lt;?php </b><b style="color:#263865">the_ID() </b><b style="color:#e5242e">?&gt;</b><b style="color:#2f3c90">&quot; </b><b style="color:#a65f2b">class=</b><b style="color:#2f3c90">&quot;</b><b style="color:#e5242e">&lt;?php </b><b style="color:#263865">wpbx_post_class() </b><b style="color:#e5242e">?&gt;</b><b style="color:#2f3c90">&quot;</b><b style="color:#8b2a8f">&gt;</b></div>
<div class="cl" style="top:17.25px">                <b style="color:#8b2a8f">&lt;div </b><b style="color:#a65f2b">class=</b><b style="color:#2f3c90">&quot;entry-top&quot;</b><b style="color:#8b2a8f">&gt;</b></div>
<div class="cl" style="top:28.49px">                    <b style="color:#8b2a8f">&lt;div </b><b style="color:#a65f2b">class=</b><b style="color:#2f3c90">&quot;entry-meta-top clearfix&quot;</b><b style="color:#8b2a8f">&gt;</b></div>
<div class="cl" style="top:39.74px">                        <b style="color:#8b2a8f">&lt;ul </b><b style="color:#a65f2b">class=</b><b style="color:#2f3c90">&quot;entry-tools&quot;</b><b style="color:#8b2a8f">&gt;</b></div>
<div class="cl" style="top:50.98px">                            <b style="color:#e5242e">&lt;?php </b><b style="color:#9e2566">if</b><b style="color:#263865">(</b><b style="color:#6b2aa3">function_exists</b><b style="color:#263865">(</b><b style="color:#ea6d1d">&#x27;wp_email&#x27;</b><b style="color:#263865">)) { </b><b style="color:#e5242e">?&gt;</b><b style="color:#8b2a8f">&lt;li </b><b style="color:#a65f2b">class=</b><b style="color:#2f3c90">&quot;entry-email&quot;</b><b style="color:#8b2a8f">&gt;</b><b style="color:#e5242e">&lt;?php </b><b style="color:#263865">email_link(); </b><b style="color:#e5242e">?&gt;</b><b style="color:#8b2a8f">&lt;/li&gt;</b><b style="color:#e5242e">&lt;?php </b><b style="color:#263865">} </b><b style="color:#e5242e">?</b></div>
<div class="cl" style="top:62.22px"><b style="color:#e5242e">&gt;</b></div>
<div class="cl" style="top:73.47px">                            <b style="color:#e5242e">&lt;?php </b><b style="color:#9e2566">if</b><b style="color:#263865">(</b><b style="color:#6b2aa3">function_exists</b><b style="color:#263865">(</b><b style="color:#ea6d1d">&#x27;wp_print&#x27;</b><b style="color:#263865">)) { </b><b style="color:#e5242e">?&gt;</b><b style="color:#8b2a8f">&lt;li </b><b style="color:#a65f2b">class=</b><b style="color:#2f3c90">&quot;entry-print&quot;</b><b style="color:#8b2a8f">&gt;</b><b style="color:#e5242e">&lt;?php </b><b style="color:#263865">print_link(); </b><b style="color:#e5242e">?&gt;</b><b style="color:#8b2a8f">&lt;/li&gt;</b><b style="color:#e5242e">&lt;?php </b><b style="color:#263865">} </b><b style="color:#e5242e">?</b></div>
<div class="cl" style="top:84.71px"><b style="color:#e5242e">&gt;</b></div>
<div class="cl" style="top:95.96px">                        <b style="color:#8b2a8f">&lt;/ul&gt;</b></div>
<div class="cl" style="top:118.45px">                        <b style="color:#8b2a8f">&lt;span </b><b style="color:#a65f2b">class=</b><b style="color:#2f3c90">&quot;entry-date&quot;</b><b style="color:#8b2a8f">&gt;</b><b style="color:#e5242e">&lt;?php </b><b style="color:#6b2aa3">unset</b><b style="color:#263865">(</b><b style="color:#a9713a">$previousday</b><b style="color:#263865">); </b><b style="color:#6b2aa3">printf</b><b style="color:#263865">( __( </b><b style="color:#ea6d1d">&#x27;%1$s&#x27;</b><b style="color:#263865">, </b><b style="color:#ea6d1d">&#x27;wpbx&#x27; </b><b style="color:#263865">), the_date( </b><b style="color:#ea6d1d">&#x27;D, M j Y&#x27;</b><b style="color:#263865">, </b></div>
<div class="cl" style="top:129.69px"><b style="color:#ea6d1d">&#x27;&#x27;</b><b style="color:#263865">, </b><b style="color:#ea6d1d">&#x27;&#x27;</b><b style="color:#263865">, </b><b style="color:#9e2566">false </b><b style="color:#263865">) ) </b><b style="color:#e5242e">?&gt;</b><b style="color:#8b2a8f">&lt;/span&gt;</b></div>
<div class="cl" style="top:140.94px">                        <b style="color:#8b2a8f">&lt;span </b><b style="color:#a65f2b">class=</b><b style="color:#2f3c90">&quot;entry-meta-sep&quot;</b><b style="color:#8b2a8f">&gt;</b><b style="color:#222222">|</b><b style="color:#8b2a8f">&lt;/span&gt;</b></div>
<div class="cl" style="top:152.19px">                        <b style="color:#8b2a8f">&lt;span </b><b style="color:#a65f2b">class=</b><b style="color:#2f3c90">&quot;entry-comm&quot;</b><b style="color:#8b2a8f">&gt;</b><b style="color:#e5242e">&lt;?php </b><b style="color:#263865">comments_popup_link( __( </b><b style="color:#ea6d1d">&#x27;Pas encore de commentaire&#x27;</b><b style="color:#263865">, </b><b style="color:#ea6d1d">&#x27;wpbx&#x27; </b><b style="color:#263865">), __( </b><b style="color:#ea6d1d">&#x27;1 </b></div>
<div class="cl" style="top:163.43px"><b style="color:#ea6d1d">Commentaire&#x27;</b><b style="color:#263865">, </b><b style="color:#ea6d1d">&#x27;wpbx&#x27; </b><b style="color:#263865">), __( </b><b style="color:#ea6d1d">&#x27;% Commentaires&#x27;</b><b style="color:#263865">, </b><b style="color:#ea6d1d">&#x27;wpbx&#x27; </b><b style="color:#263865">) ) </b><b style="color:#e5242e">?&gt;</b><b style="color:#8b2a8f">&lt;/span&gt;</b></div>
<div class="cl" style="top:174.67px">                    <b style="color:#8b2a8f">&lt;/div&gt;</b></div>
<div class="cl" style="top:197.16px">                    <b style="color:#8b2a8f">&lt;h2 </b><b style="color:#a65f2b">class=</b><b style="color:#2f3c90">&quot;entry-title&quot;</b><b style="color:#8b2a8f">&gt;</b><b style="color:#e5242e">&lt;?php </b><b style="color:#263865">the_title() </b><b style="color:#e5242e">?&gt;</b><b style="color:#8b2a8f">&lt;/h2&gt;</b></div>
<div class="cl" style="top:219.65px">                    <b style="color:#8b2a8f">&lt;div </b><b style="color:#a65f2b">class=</b><b style="color:#2f3c90">&quot;entry-meta&quot;</b><b style="color:#8b2a8f">&gt;</b></div>
<div class="cl" style="top:230.90px">                        <b style="color:#8b2a8f">&lt;span </b><b style="color:#a65f2b">class=</b><b style="color:#2f3c90">&quot;entry-author&quot;</b><b style="color:#8b2a8f">&gt;</b><b style="color:#e5242e">&lt;?php </b><b style="color:#6b2aa3">printf</b><b style="color:#263865">( __( </b><b style="color:#ea6d1d">&#x27;By: %s&#x27;</b><b style="color:#263865">, </b><b style="color:#ea6d1d">&#x27;wpbx&#x27; </b><b style="color:#263865">), </b><b style="color:#ea6d1d">&#x27;&lt;a class=&quot;url fn n&quot; href=&quot;&#x27; </b><b style="color:#263865">. </b></div>
<div class="cl" style="top:242.14px"><b style="color:#263865">get_author_link( </b><b style="color:#9e2566">false</b><b style="color:#263865">, </b><b style="color:#a9713a">$authordata</b><b style="color:#263865">-&gt;ID, </b><b style="color:#a9713a">$authordata</b><b style="color:#263865">-&gt;user_nicename ) . </b><b style="color:#ea6d1d">&#x27;&quot; title=&quot;&#x27; </b><b style="color:#263865">. </b><b style="color:#6b2aa3">sprintf</b><b style="color:#263865">( __( </b><b style="color:#ea6d1d">&#x27;Voir tous les articles de %s&#x27;</b><b style="color:#263865">, </b></div>
<div class="cl" style="top:253.39px"><b style="color:#ea6d1d">&#x27;wpbx&#x27; </b><b style="color:#263865">), </b><b style="color:#a9713a">$authordata</b><b style="color:#263865">-&gt;display_name ) . </b><b style="color:#ea6d1d">&#x27;&quot;&gt;&#x27; </b><b style="color:#263865">. get_the_author() . </b><b style="color:#ea6d1d">&#x27;&lt;/a&gt;&#x27; </b><b style="color:#263865">) </b><b style="color:#e5242e">?&gt;</b><b style="color:#8b2a8f">&lt;/span&gt;</b></div>
<div class="cl" style="top:264.63px">                    <b style="color:#8b2a8f">&lt;/div&gt;</b></div>
<div class="cl" style="top:275.88px">                <b style="color:#8b2a8f">&lt;/div&gt;</b></div>
<div class="cl" style="top:298.37px">                <b style="color:#8b2a8f">&lt;div </b><b style="color:#a65f2b">class=</b><b style="color:#2f3c90">&quot;entry-content clearfix&quot;</b><b style="color:#8b2a8f">&gt;</b></div>
<div class="cl" style="top:309.61px">                    <b style="color:#e5242e">&lt;?php </b><b style="color:#263865">the_content() </b><b style="color:#e5242e">?&gt;</b></div>
<div class="cl" style="top:320.86px">                    <b style="color:#e5242e">&lt;?php </b><b style="color:#263865">wp_link_pages(</b><b style="color:#ea6d1d">&#x27;before=&lt;div class=&quot;page-link&quot;&gt;&#x27; </b><b style="color:#263865">. __( </b><b style="color:#ea6d1d">&#x27;Pages:&#x27;</b><b style="color:#263865">, </b><b style="color:#ea6d1d">&#x27;wpbx&#x27; </b><b style="color:#263865">) . </b><b style="color:#ea6d1d">&#x27;&amp;after=&lt;/div&gt;&#x27;</b><b style="color:#263865">) </b><b style="color:#e5242e">?&gt;</b></div>
<div class="cl" style="top:332.10px">                <b style="color:#8b2a8f">&lt;/div&gt;</b></div>
<div class="cl" style="top:354.59px">                <b style="color:#8b2a8f">&lt;div </b><b style="color:#a65f2b">class=</b><b style="color:#2f3c90">&quot;entry-meta entry-bottom&quot;</b><b style="color:#8b2a8f">&gt;</b></div>
<div class="cl" style="top:365.84px">                    <b style="color:#e5242e">&lt;?php </b><b style="color:#9e2566">if</b><b style="color:#263865">(</b><b style="color:#6b2aa3">function_exists</b><b style="color:#263865">(</b><b style="color:#ea6d1d">&#x27;the_ratings&#x27;</b><b style="color:#263865">)) { </b><b style="color:#e5242e">?&gt;</b><b style="color:#8b2a8f">&lt;div </b><b style="color:#a65f2b">class=</b><b style="color:#2f3c90">&quot;entry-rating&quot;</b><b style="color:#8b2a8f">&gt;</b><b style="color:#e5242e">&lt;?php </b><b style="color:#263865">the_ratings(); </b><b style="color:#e5242e">?&gt;</b><b style="color:#8b2a8f">&lt;/div&gt;</b><b style="color:#e5242e">&lt;?php </b><b style="color:#263865">} </b><b style="color:#e5242e">?&gt;</b></div>
<div class="cl" style="top:377.08px">                    <b style="color:#e5242e">&lt;?php </b><b style="color:#263865">the_tags( __( </b><b style="color:#ea6d1d">&#x27;&lt;span class=&quot;tag-links&quot;&gt;Tags: &#x27;</b><b style="color:#263865">, </b><b style="color:#ea6d1d">&#x27;wpbx&#x27; </b><b style="color:#263865">), </b><b style="color:#ea6d1d">&quot;, &quot;</b><b style="color:#263865">, </b><b style="color:#ea6d1d">&quot;&lt;/span&gt;\n&quot; </b><b style="color:#263865">) </b><b style="color:#e5242e">?&gt;</b></div>
<div class="cl" style="top:399.57px">                    <b style="color:#8b2a8f">&lt;div </b><b style="color:#a65f2b">class=</b><b style="color:#2f3c90">&quot;entry-bookmarks&quot;</b><b style="color:#8b2a8f">&gt;</b></div>
<div class="cl" style="top:410.82px">                        <b style="color:#e5242e">&lt;?php </b><b style="color:#9e2566">include </b><b style="color:#263865">(TEMPLATEPATH . </b><b style="color:#ea6d1d">&#x27;/bookmarks.php&#x27;</b><b style="color:#263865">); </b><b style="color:#e5242e">?&gt;</b></div>
<div class="cl" style="top:422.07px">                    <b style="color:#8b2a8f">&lt;/div&gt;</b></div>
<div class="cl" style="top:433.31px">                <b style="color:#8b2a8f">&lt;/div&gt;</b></div>
<div class="cl" style="top:455.80px">                <b style="color:#8b2a8f">&lt;div </b><b style="color:#a65f2b">id=</b><b style="color:#2f3c90">&quot;entry-author&quot; </b><b style="color:#a65f2b">class=</b><b style="color:#2f3c90">&quot;section-box clearfix&quot;</b><b style="color:#8b2a8f">&gt;</b></div>
<div class="cl" style="top:467.04px">                    <b style="color:#8b2a8f">&lt;div </b><b style="color:#a65f2b">class=</b><b style="color:#2f3c90">&quot;author-avatar&quot;</b><b style="color:#8b2a8f">&gt;</b></div>
<div class="cl" style="top:478.29px">                        <b style="color:#e5242e">&lt;?php</b></div>
<div class="cl" style="top:489.53px">                            <b style="color:#a9713a">$AuthorEmail </b><b style="color:#263865">= get_the_author_email();</b></div>
<div class="cl" style="top:500.78px">                            <b style="color:#a9713a">$GravURL </b><b style="color:#263865">= get_bloginfo(</b><b style="color:#ea6d1d">&#x27;template_directory&#x27;</b><b style="color:#263865">);</b></div>
<div class="cl" style="top:512.02px">                            <b style="color:#a9713a">$Grav </b><b style="color:#263865">= get_avatar( </b><b style="color:#a9713a">$email </b><b style="color:#263865">= </b><b style="color:#a9713a">$AuthorEmail</b><b style="color:#263865">, </b><b style="color:#a9713a">$size </b><b style="color:#263865">= </b><b style="color:#2b2bd8">85</b><b style="color:#263865">, </b><b style="color:#a9713a">$default </b><b style="color:#263865">= </b><b style="color:#a9713a">$GravURL </b><b style="color:#263865">. </b><b style="color:#ea6d1d">&#x27;/images/gravatar<span style="position:relative;top:-1.6px">-</span></b></div>
<div class="a" style="left:404.5px;top:162px;width:1px;height:10.5px;background:#333"></div>
</div>
<div id="sb"></div>
<div class="a" style="left:1001.5px;top:102px;width:11px;height:8px;border-radius:0 0 6px 6px;background:linear-gradient(90deg,#dadada,#fdfdfd 50%,#e0e0e0);box-shadow:0 1px 1px rgba(0,0,0,.2)"></div>
<div class="a" style="left:1001.3px;top:147.5px;width:11.2px;height:264px;border-radius:6px;background:linear-gradient(90deg,#1d4cc4,#4f8ae8 14%,#9ccaf8 30%,#6ea8f0 48%,#a6dcff 68%,#5a96ea 86%,#2452c8);box-shadow:inset 0 3px 2px -1px rgba(0,40,170,.75),inset 0 -3px 2px -1px rgba(0,40,170,.75)"></div>
<div class="a" style="left:1001.5px;top:580px;width:11px;height:9.5px;border-radius:0 0 6px 6px;background:linear-gradient(90deg,#dadada,#fdfdfd 50%,#e0e0e0);box-shadow:0 1px 1px rgba(0,0,0,.25)"></div>
<div class="a" style="left:1001px;top:590px;width:12px;height:28px;background:linear-gradient(90deg,#e6e6e6,#fafafa 50%,#ececec);border-left:1px solid #c8c8c8"></div>
<div class="a" style="left:1001px;top:603.5px;width:12px;height:1px;background:#cfcfcf"></div>
<div class="a" style="left:1004px;top:594px;width:0;height:0;border-bottom:5.5px solid #333;border-left:3px solid transparent;border-right:3px solid transparent"></div>
<div class="a" style="left:1004px;top:608px;width:0;height:0;border-top:5.5px solid #333;border-left:3px solid transparent;border-right:3px solid transparent"></div>

<div id="bb"></div>
<div class="bdiv" style="left:33.5px"></div><div class="bdiv" style="left:60.3px"></div><div class="bdiv" style="left:86.7px"></div><div class="bdiv" style="left:113.4px"></div>
<div class="bdiv" style="left:201px"></div><div class="bdiv" style="left:227.7px"></div><div class="bdiv" style="left:287px"></div><div class="bdiv" style="left:343.2px"></div><div class="bdiv" style="left:405.4px"></div><div class="bdiv" style="left:431.3px"></div>
<div class="a" style="left:14.5px;top:619px;font-size:16px;line-height:18px;font-weight:bold;color:#1f1f1f">+</div>
<svg class="a" style="left:39.2px;top:623px" width="10" height="10" viewBox="0 0 10 10"><path d="M5 0.3L6 1.6 7.6 1.1 7.9 2.7 9.4 3.3 8.7 4.8 9.4 6.3 7.9 6.9 7.6 8.5 6 8 5 9.3 4 8 2.4 8.5 2.1 6.9 0.6 6.3 1.3 4.8 0.6 3.3 2.1 2.7 2.4 1.1 4 1.6Z" fill="#222"/><circle cx="5" cy="4.8" r="1.5" fill="#e8e8e8"/></svg>
<div class="a" style="left:51.5px;top:627px;width:0;height:0;border-top:3px solid #333;border-left:2px solid transparent;border-right:2px solid transparent"></div>
<svg class="a" style="left:67px;top:622px" width="12" height="12" viewBox="0 0 12 12"><circle cx="2" cy="10" r="1.7" fill="#2a2a2a"/><path d="M2.6 5.2a3.6 3.6 0 0 1 4.2 4.2M2.9 2.6a6.2 6.2 0 0 1 6.5 6.5M3.6 0.2a8.6 8.6 0 0 1 8.2 8.2" fill="none" stroke="#2a2a2a" stroke-width="1.35"/></svg>
<div class="a" style="left:94px;top:620px;font-size:13px;line-height:16px;font-weight:bold;color:#1f1f1f">{}</div>
<div class="a" style="left:189.5px;top:623px;width:8px;height:11px;border-left:1px solid #999;border-right:1px solid #999"></div>
<div class="a" style="left:193px;top:623px;width:1px;height:11px;background:#999"></div>
<svg class="a" style="left:206.5px;top:623px" width="10" height="10" viewBox="0 0 10 10"><path d="M5 0.3L6 1.6 7.6 1.1 7.9 2.7 9.4 3.3 8.7 4.8 9.4 6.3 7.9 6.9 7.6 8.5 6 8 5 9.3 4 8 2.4 8.5 2.1 6.9 0.6 6.3 1.3 4.8 0.6 3.3 2.1 2.7 2.4 1.1 4 1.6Z" fill="#222"/><circle cx="5" cy="4.8" r="1.5" fill="#e8e8e8"/></svg>
<div class="a" style="left:219px;top:627px;width:0;height:0;border-top:3px solid #333;border-left:2px solid transparent;border-right:2px solid transparent"></div>
<svg class="a" style="left:235px;top:622px" width="12" height="12" viewBox="0 0 12 12"><circle cx="2" cy="10" r="1.7" fill="#2a2a2a"/><path d="M2.6 5.2a3.6 3.6 0 0 1 4.2 4.2M2.9 2.6a6.2 6.2 0 0 1 6.5 6.5M3.6 0.2a8.6 8.6 0 0 1 8.2 8.2" fill="none" stroke="#2a2a2a" stroke-width="1.35"/></svg>
<div class="a" style="left:295.5px;top:623px;width:10px;height:10px;border-radius:50%;background:#222;color:#fff;font-size:8.5px;font-weight:bold;line-height:10px;text-align:center">?</div>
<svg class="a" style="left:351px;top:622px" width="10" height="12" viewBox="0 0 10 12"><path d="M0.5 0.5H6L9.5 4V11.5H0.5Z" fill="#222"/><path d="M6 0.5V4H9.5" fill="#ddd"/></svg>
<div class="a" style="left:395.5px;top:627px;width:0;height:0;border-top:3px solid #333;border-left:2px solid transparent;border-right:2px solid transparent"></div>
<svg class="a" style="left:412.5px;top:622px" width="11" height="11" viewBox="0 0 11 11"><path d="M5.5 0.5L10.7 10.5H0.3Z" fill="#b0b0b0"/><path d="M5.5 3.5V7M5.5 8.3V9.3" stroke="#eee" stroke-width="1.2"/></svg>
<svg class="a" style="left:1002px;top:627px" width="10" height="10" viewBox="0 0 10 10"><path d="M1 9.5L9.5 1M4 9.5L9.5 4M7 9.5L9.5 7" stroke="#9a9a9a" stroke-width="0.9"/></svg>

<div id="m_coda" class="fit" style="z-index:6;left:40.30px;top:0.05px;font-size:14.00px;line-height:14.00px;font-weight:bold;color:#111;transform:scaleX(0.8605);">Coda</div>
<div id="m_file" class="fit" style="z-index:6;left:87.13px;top:0.05px;font-size:14.00px;line-height:14.00px;color:#1c1c1c;transform:scaleX(0.8681);text-shadow:0.2px 0 0 #1c1c1c">File</div>
<div id="m_edit" class="fit" style="z-index:6;left:123.40px;top:0.05px;font-size:14.00px;line-height:14.00px;color:#1c1c1c;transform:scaleX(0.9038);text-shadow:0.2px 0 0 #1c1c1c">Edit</div>
<div id="m_view" class="fit" style="z-index:6;left:162.00px;top:0.05px;font-size:14.00px;line-height:14.00px;color:#1c1c1c;transform:scaleX(0.8812);text-shadow:0.2px 0 0 #1c1c1c">View</div>
<div id="m_text" class="fit" style="z-index:6;left:206.00px;top:0.05px;font-size:14.00px;line-height:14.00px;color:#1c1c1c;transform:scaleX(0.9695);text-shadow:0.2px 0 0 #1c1c1c">Text</div>
<div id="m_go" class="fit" style="z-index:6;left:248.00px;top:0.05px;font-size:14.00px;line-height:14.00px;color:#1c1c1c;transform:scaleX(0.7941);text-shadow:0.2px 0 0 #1c1c1c">Go</div>
<div id="m_sites" class="fit" style="z-index:6;left:279.80px;top:0.05px;font-size:14.00px;line-height:14.00px;color:#1c1c1c;transform:scaleX(0.8257);text-shadow:0.2px 0 0 #1c1c1c">Sites</div>
<div id="m_window" class="fit" style="z-index:6;left:322.00px;top:0.05px;font-size:14.00px;line-height:14.00px;color:#1c1c1c;transform:scaleX(0.9175);text-shadow:0.2px 0 0 #1c1c1c">Window</div>
<div id="m_purchase" class="fit" style="z-index:6;left:383.11px;top:0.05px;font-size:14.00px;line-height:14.00px;color:#1c1c1c;transform:scaleX(0.8910);text-shadow:0.2px 0 0 #1c1c1c">Purchase</div>
<div id="m_help" class="fit" style="z-index:6;left:451.55px;top:0.05px;font-size:14.00px;line-height:14.00px;color:#1c1c1c;transform:scaleX(0.9462);text-shadow:0.2px 0 0 #1c1c1c">Help</div>
<div id="m_rech" class="fit" style="z-index:6;left:890.80px;top:1.46px;font-size:11.50px;line-height:11.50px;color:#2a2a2a;transform:scaleX(0.9144);">(Rechargée)</div>
<div id="m_time" class="fit" style="z-index:6;left:963.30px;top:-0.05px;font-size:14.00px;line-height:14.00px;color:#1c1c1c;transform:scaleX(0.9372);text-shadow:0.2px 0 0 #1c1c1c">mar. 18:25</div>
<div id="title" class="fit" style="z-index:6;left:482.00px;top:20.79px;font-size:12.30px;line-height:12.30px;color:#151515;transform:scaleX(0.9960);text-shadow:0.25px 0 0 #151515">single.php</div>
<div id="l_sites" class="fit" style="z-index:6;left:213.40px;top:68.09px;font-size:11.00px;line-height:11.00px;color:#1c1c1c;transform:scaleX(0.8656);text-shadow:0.2px 0 0 #1c1c1c,0 1px 0 rgba(255,255,255,.3)">Sites</div>
<div id="l_edit" class="fit" style="z-index:6;left:252.60px;top:68.09px;font-size:11.00px;line-height:11.00px;color:#1c1c1c;transform:scaleX(0.9154);text-shadow:0.2px 0 0 #1c1c1c,0 1px 0 rgba(255,255,255,.3)">Edit</div>
<div id="l_preview" class="fit" style="z-index:6;left:283.90px;top:68.09px;font-size:11.00px;line-height:11.00px;color:#1c1c1c;transform:scaleX(0.8882);text-shadow:0.2px 0 0 #1c1c1c,0 1px 0 rgba(255,255,255,.3)">Preview</div>
<div id="l_css" class="fit" style="z-index:6;left:333.10px;top:68.09px;font-size:11.00px;line-height:11.00px;color:#1c1c1c;transform:scaleX(0.7540);text-shadow:0.2px 0 0 #1c1c1c,0 1px 0 rgba(255,255,255,.3)">CSS</div>
<div id="l_term" class="fit" style="z-index:6;left:364.20px;top:68.09px;font-size:11.00px;line-height:11.00px;color:#1c1c1c;transform:scaleX(0.9776);text-shadow:0.2px 0 0 #1c1c1c,0 1px 0 rgba(255,255,255,.3)">Terminal</div>
<div id="l_books" class="fit" style="z-index:6;left:414.00px;top:68.09px;font-size:11.00px;line-height:11.00px;color:#1c1c1c;transform:scaleX(0.8496);text-shadow:0.2px 0 0 #1c1c1c,0 1px 0 rgba(255,255,255,.3)">Books</div>
<div id="l_search" class="fit" style="z-index:6;left:900.20px;top:68.09px;font-size:11.00px;line-height:11.00px;color:#1c1c1c;transform:scaleX(0.8664);text-shadow:0.2px 0 0 #1c1c1c,0 1px 0 rgba(255,255,255,.3)">Search Files</div>
<div id="days" class="fit" style="z-index:6;left:893.00px;top:20.82px;font-size:10.60px;line-height:10.60px;color:#4a4a4a;transform:scaleX(0.8987);">7 days left. <span style="text-decoration:underline;text-underline-offset:1.5px">Buy now!</span></div>
<div id="files" class="fit" style="z-index:6;left:866.94px;top:46.42px;font-size:12.50px;line-height:12.50px;color:#8c8c8c;transform:scaleX(0.8591);">Files</div>
<div id="t_local" class="fit" style="z-index:6;left:42.00px;top:87.31px;font-size:10.50px;line-height:10.50px;font-weight:bold;color:#ffffff;transform:scaleX(0.8943);text-shadow:0 1px 0 rgba(0,60,140,.25)">Local</div>
<div id="t_remote" class="fit" style="z-index:6;left:135.10px;top:87.31px;font-size:10.50px;line-height:10.50px;font-weight:bold;color:#333333;transform:scaleX(0.8715);">Remote</div>
<div id="thestars" class="fit" style="z-index:6;left:28.00px;top:105.29px;font-size:11.00px;line-height:11.00px;font-weight:bold;color:#1b1b1b;transform:scaleX(0.8435);">thestars</div>
<div id="share" class="fit" style="z-index:6;left:252.60px;top:623.09px;font-size:11.00px;line-height:11.00px;font-weight:bold;color:#2a2a2a;transform:scaleX(0.8242);">Share</div>
<div id="hints" class="fit" style="z-index:6;left:312.00px;top:623.09px;font-size:11.00px;line-height:11.00px;font-weight:bold;color:#2a2a2a;transform:scaleX(0.8509);">Hints</div>
<div id="clips" class="fit" style="z-index:6;left:365.30px;top:623.09px;font-size:11.00px;line-height:11.00px;font-weight:bold;color:#2a2a2a;transform:scaleX(0.8478);">Clips</div>
<div id="pos" class="fit" style="z-index:6;left:967.80px;top:623.41px;font-size:10.50px;line-height:10.50px;color:#707070;transform:scaleX(0.8923);text-shadow:0 1px 0 rgba(255,255,255,.6)">18:174</div>

</body></html>
